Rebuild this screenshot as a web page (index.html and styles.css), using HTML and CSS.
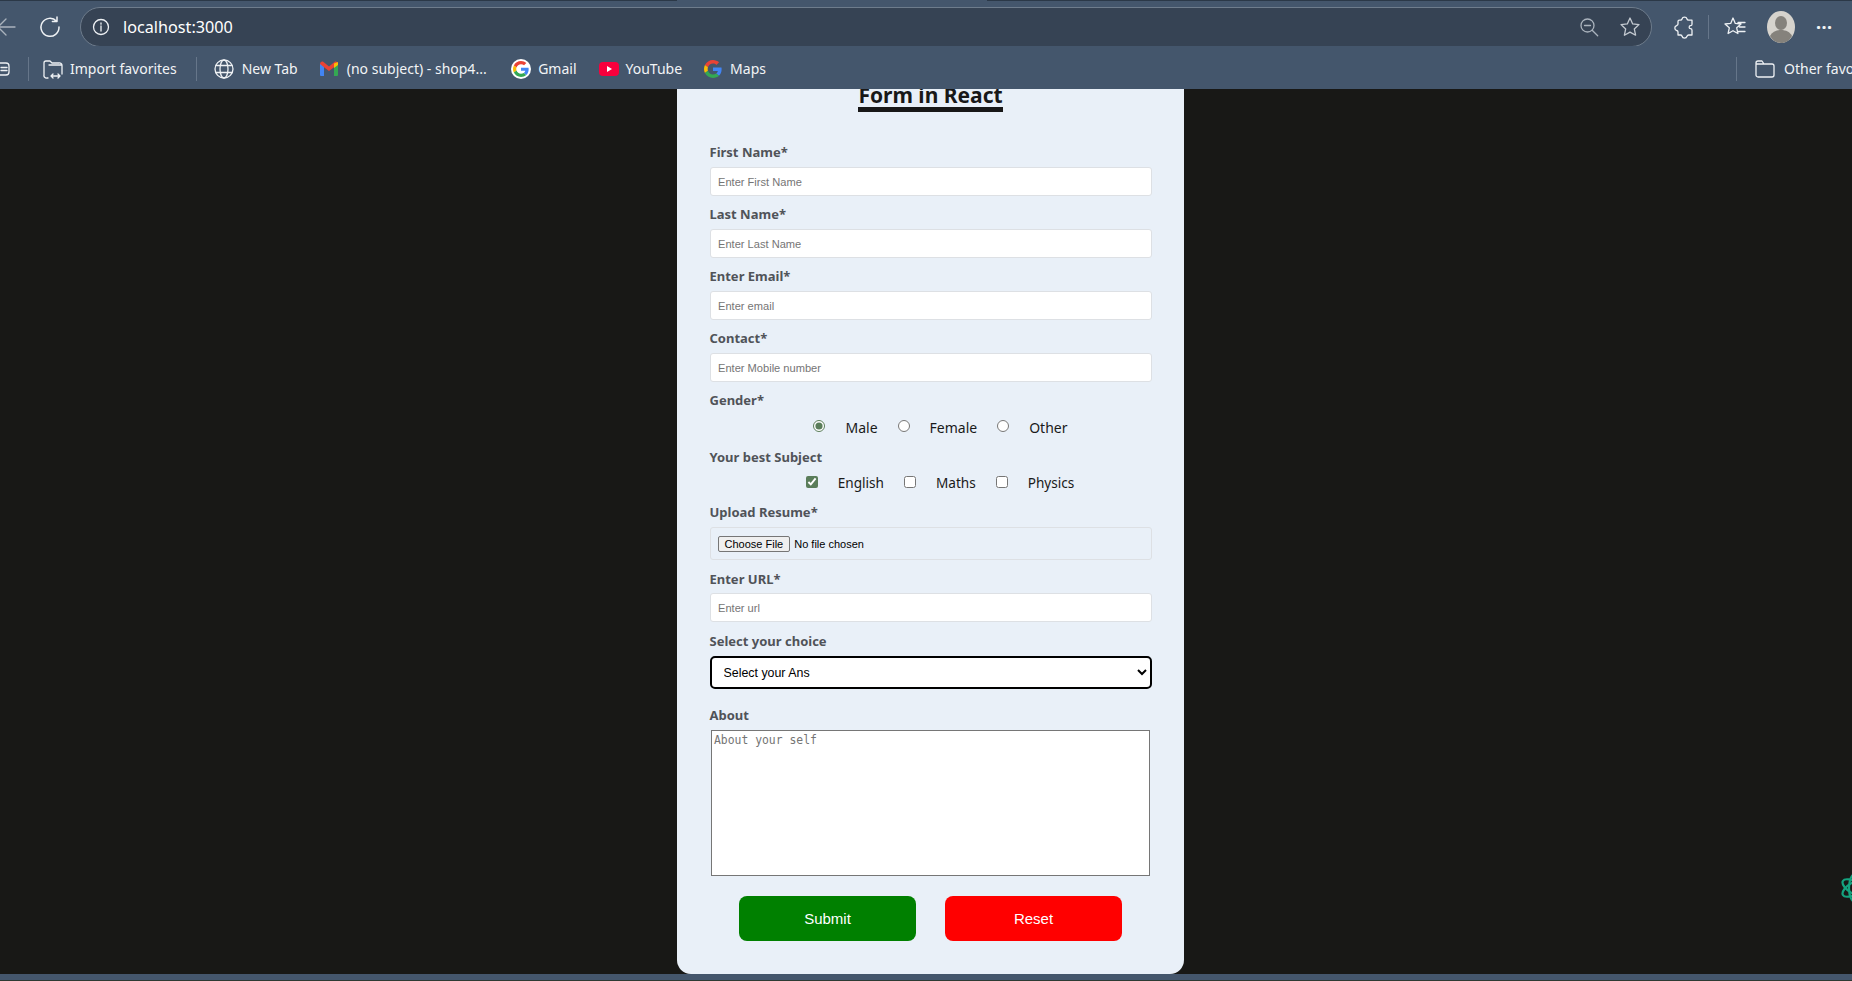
FILE: index.html
```html
<!DOCTYPE html>
<html lang="en">

<head>
    <meta charset="UTF-8">
    <meta name="viewport" content="width=device-width, initial-scale=1.0">
    <title>Form in React</title>
    <link rel="stylesheet" href="styles.css">
</head>

<body>
    <svg class="defs" width="0" height="0">
        <symbol id="g-logo" viewBox="0 0 48 48">
            <path fill="#EA4335" d="M24 9.5c3.54 0 6.71 1.22 9.21 3.6l6.85-6.85C35.9 2.38 30.47 0 24 0 14.62 0 6.51 5.38 2.56 13.22l7.98 6.19C12.43 13.72 17.74 9.5 24 9.5z"/>
            <path fill="#4285F4" d="M46.98 24.55c0-1.57-.15-3.09-.38-4.55H24v9.02h12.94c-.58 2.96-2.26 5.48-4.78 7.18l7.73 6c4.51-4.18 7.09-10.36 7.09-17.65z"/>
            <path fill="#FBBC05" d="M10.53 28.59c-.48-1.45-.76-2.99-.76-4.59s.27-3.14.76-4.59l-7.98-6.19C.92 16.46 0 20.12 0 24c0 3.88.92 7.54 2.56 10.78l7.97-6.19z"/>
            <path fill="#34A853" d="M24 48c6.48 0 11.93-2.13 15.89-5.81l-7.73-6c-2.15 1.45-4.92 2.3-8.16 2.3-6.26 0-11.57-4.22-13.47-9.91l-7.98 6.19C6.51 42.62 14.62 48 24 48z"/>
        </symbol>
    </svg>

    <div class="tabstrip">
        <div class="tab-edge tab-left"></div>
        <div class="tab-edge tab-right"></div>
    </div>

    <header class="toolbar">
        <svg class="ico back" width="16" height="24" viewBox="0 0 16 24"><path d="M15 12H-2M6 4l-8 8 8 8"/></svg>
        <svg class="ico reload" width="22" height="22" viewBox="0 0 22 22"><path d="M17.6 5.2A9 9 0 1 0 20 11M18 1v4.6h-4.6"/></svg>
        <div class="addressbar">
            <svg class="ico" width="18" height="18" viewBox="0 0 18 18"><circle cx="9" cy="9" r="7.5"/><path d="M9 8v5M9 5v1.2"/></svg>
            <span class="url">localhost:3000</span>
            <svg class="ico dim zoom-ico" width="20" height="20" viewBox="0 0 20 20"><circle cx="8.5" cy="8.5" r="6.5"/><path d="M5.5 8.5h6M13.2 13.2l5.5 5.5"/></svg>
            <svg class="ico star" width="22" height="22" viewBox="0 0 22 22"><path d="M11 2l2.700 5.900 6.300.7-4.700 4.300 1.300 6.300L11 16.100l-5.600 3.100 1.300-6.300L2 8.600l6.300-.7z"/></svg>
        </div>
        <svg class="ico puzzle" width="20" height="24" viewBox="0 0 20 24"><path d="M8 4a2.600 2.600 0 0 1 5 0c.2 1 .8 1.200 1.800 1.200H18v4c0 1-.8 1.500-1.500 1.500-1.800 0-1.800 3 0 3 .7 0 1.500.5 1.500 1.500V20h-3.400c-1 0-1.300.5-1.600 1.300a2.600 2.600 0 0 1-5 0C8 20.500 7.500 20 6.600 20H4v-3c0-.8-.5-1.300-1.300-1.500a2.600 2.600 0 0 1 0-5C3.500 10.300 4 9.800 4 9V6.500c0-.8.500-1.300 1.300-1.300h1C7.200 5.200 7.800 5 8 4z"/></svg>
        <span class="tool-sep"></span>
        <svg class="ico fav" width="22" height="22" viewBox="0 0 22 22"><path d="M9 2l2.300 5.400 5.700.6-4.300 3.800 1.200 5.700L9 14.700l-4.900 2.800 1.200-5.700L1 8l5.700-.6zM14 6.500h7M15.500 11H21M14.500 15.500H21"/></svg>
        <svg class="avatar" width="28" height="32" viewBox="0 0 28 32"><ellipse cx="14" cy="16" rx="14" ry="16" fill="#d6d3cd"/><ellipse cx="14" cy="12" rx="6" ry="7" fill="#85827c"/><path d="M3 25c2-4 6-6 11-6s9 2 11 6c-2.500 4.500-6.500 7-11 7s-8.500-2.500-11-7z" fill="#85827c"/></svg>
        <span class="more">···</span>
    </header>

    <nav class="bookmarks">
        <svg class="ico" width="12" height="20" viewBox="0 0 12 20"><rect x="-8" y="4" width="17" height="12" rx="3"/><path d="M1 8.500h6M1 11.500h6"/></svg>
        <span class="bm-sep first-sep"></span>
        <a class="bm import">
            <svg class="ico" width="20" height="22" viewBox="0 0 20 22"><path d="M1 17V5a2 2 0 0 1 2-2h4l2 2h7a2.500 2.500 0 0 1 3 2.500V16M1 17a2.500 2.500 0 0 0 3 3h1M6 7h13M8 18h9M10 16l-2 2 2 2M15 16l2 2-2 2"/></svg>
            Import favorites
        </a>
        <span class="bm-sep second-sep"></span>
        <a class="bm new-tab">
            <svg class="ico" width="20" height="20" viewBox="0 0 20 20"><circle cx="10" cy="10" r="9"/><ellipse cx="10" cy="10" rx="4" ry="9"/><path d="M2 6.500h16M2 13.500h16"/></svg>
            New Tab
        </a>
        <a class="bm mail">
            <svg width="18" height="16" viewBox="0 0 18 16"><path fill="#4285F4" d="M0 3h4v12H1a1 1 0 0 1-1-1z"/><path fill="#34A853" d="M14 3h4v11a1 1 0 0 1-1 1h-3z"/><path fill="#EA4335" d="M0 3c0-2 2.200-3 3.500-2L9 5.500 14.500 1C16 0 18 1 18 3l-4 3.200L9 10 4 6.200z"/><path fill="#FBBC05" d="M14 2.500 18 1v3l-4 3z"/></svg>
            (no subject) - shop4...
        </a>
        <a class="bm gmail">
            <span class="g-round"><svg width="16" height="16"><use href="#g-logo"/></svg></span>
            Gmail
        </a>
        <a class="bm">
            <svg width="20" height="14" viewBox="0 0 20 14"><rect width="20" height="14" rx="4" fill="#f8003c"/><path d="M8 4l5 3-5 3z" fill="#fff"/></svg>
            YouTube
        </a>
        <a class="bm maps">
            <svg width="18" height="18"><use href="#g-logo"/></svg>
            Maps
        </a>
        <div class="bm-right">
            <span class="bm-sep"></span>
            <svg class="ico" width="20" height="18" viewBox="0 0 20 18"><path d="M1 15V3a2 2 0 0 1 2-2h4l2 3h8a2 2 0 0 1 2 2v9a2 2 0 0 1-2 2H3a2 2 0 0 1-2-2zM1 4h8"/></svg>
            <span class="other-fav">Other favorites</span>
        </div>
    </nav>

    <main class="page">
        <form class="card">
            <h1 class="title"><span>Form in React</span></h1>

            <div class="field">
                <label for="first">First Name*</label>
                <input class="text-input" id="first" type="text" placeholder="Enter First Name">
            </div>
            <div class="field">
                <label for="last">Last Name*</label>
                <input class="text-input" id="last" type="text" placeholder="Enter Last Name">
            </div>
            <div class="field">
                <label for="email">Enter Email*</label>
                <input class="text-input" id="email" type="email" placeholder="Enter email">
            </div>
            <div class="field">
                <label for="contact">Contact*</label>
                <input class="text-input" id="contact" type="text" placeholder="Enter Mobile number">
            </div>

            <div class="field-label">Gender*</div>
            <div class="choices gender">
                <input type="radio" name="gender" id="male" checked><label for="male">Male</label>
                <input type="radio" name="gender" id="female"><label for="female">Female</label>
                <input type="radio" name="gender" id="other"><label for="other">Other</label>
            </div>

            <div class="field-label">Your best Subject</div>
            <div class="choices subject">
                <input type="checkbox" id="english" checked><label for="english">English</label>
                <input type="checkbox" id="maths"><label for="maths">Maths</label>
                <input type="checkbox" id="physics"><label for="physics">Physics</label>
            </div>

            <div class="field">
                <label for="resume">Upload Resume*</label>
                <input class="file-input" id="resume" type="file">
            </div>
            <div class="field url-field">
                <label for="url">Enter URL*</label>
                <input class="text-input" id="url" type="url" placeholder="Enter url">
            </div>
            <div class="field">
                <label for="choice">Select your choice</label>
                <select class="select-input" id="choice">
                    <option>Select your Ans</option>
                </select>
            </div>
            <div class="field about">
                <label for="about">About</label>
                <textarea id="about" placeholder="About your self"></textarea>
            </div>

            <div class="actions">
                <button class="btn submit" type="submit">Submit</button>
                <button class="btn reset" type="reset">Reset</button>
            </div>
        </form>

        <svg class="floating" width="32" height="32" viewBox="0 0 32 32"><g fill="none" stroke="#14a37f" stroke-width="2.200"><ellipse cx="16" cy="16" rx="14" ry="6" transform="rotate(30 16 16)"/><ellipse cx="16" cy="16" rx="14" ry="6" transform="rotate(90 16 16)"/><ellipse cx="16" cy="16" rx="14" ry="6" transform="rotate(150 16 16)"/></g></svg>
    </main>

    <div class="bottom-strip"></div>
</body>

</html>
```

FILE: styles.css
```css
* {
    box-sizing: border-box;
}

html,
body {
    height: 100%;
}

body {
    margin: 0;
    display: flex;
    flex-direction: column;
    overflow: hidden;
    background-color: #181816;
    font-family: "Noto Sans", Arial, sans-serif;
}

.defs {
    position: absolute;
}

/* browser chrome */
.tabstrip {
    height: 7px;
    display: flex;
    justify-content: space-between;
    background-color: #44566c;
}

.tab-edge {
    height: 1px;
    background-color: #2b3847;
}

.tab-left {
    width: 677px;
}

.tab-right {
    width: 865px;
}

.ico {
    flex: none;
    fill: none;
    stroke: #eef1f4;
    stroke-width: 1.3;
    stroke-linecap: round;
    stroke-linejoin: round;
}

.ico.dim {
    stroke: #aab3bd;
}

.toolbar {
    height: 39px;
    display: flex;
    align-items: center;
    background-color: #44566c;
}

.back {
    stroke: #aab3bd;
}

.reload {
    margin-left: 23px;
    stroke-width: 1.5;
}

.addressbar {
    width: 1572px;
    height: 40px;
    margin-left: 19px;
    padding: 0 10px 0 11px;
    display: flex;
    align-items: center;
    background-color: #364354;
    border: 1px solid #6e7c8c;
    border-radius: 20px;
}

.url {
    margin-left: 13px;
    color: #fff;
    font-size: 16.2px;
}

.zoom-ico {
    margin-left: auto;
}

.star {
    margin-left: 20px;
    stroke: #c3c9d0;
}

.puzzle {
    margin-left: 22px;
}

.tool-sep {
    width: 1px;
    height: 24px;
    margin-left: 14px;
    background-color: #66768a;
}

.fav {
    margin-left: 15px;
}

.avatar {
    flex: none;
    margin-left: 21px;
}

.more {
    margin-left: 21px;
    color: #f2f4f6;
    font-size: 18px;
    font-weight: 700;
    letter-spacing: 0.5px;
}

.bookmarks {
    height: 43px;
    padding-top: 2px;
    display: flex;
    align-items: center;
    background-color: #44566c;
    color: #f2f4f6;
    font-size: 14px;
    white-space: nowrap;
}

.bm {
    display: flex;
    align-items: center;
    gap: 7px;
    margin-left: 22px;
}

.bm-sep {
    flex: none;
    width: 1px;
    height: 24px;
    background-color: #66768a;
}

.first-sep {
    margin-left: 16px;
}

.import {
    margin-left: 14px;
}

.second-sep {
    margin-left: 19px;
}

.new-tab {
    margin-left: 17px;
    gap: 8px;
}

.mail {
    gap: 9px;
}

.gmail {
    margin-left: 24.5px;
}

.maps {
    gap: 8px;
}

.g-round {
    width: 20px;
    height: 20px;
    display: flex;
    align-items: center;
    justify-content: center;
    background-color: #fff;
    border-radius: 50%;
}

.bm-right {
    margin-left: auto;
    display: flex;
    align-items: center;
}

.bm-right .ico {
    margin-left: 18px;
}

.other-fav {
    width: 68px;
    margin-left: 9px;
    overflow: hidden;
}

/* page */
.page {
    position: relative;
    flex: 1;
    min-height: 0;
    display: flex;
    justify-content: center;
    padding-left: 9px;
    overflow: hidden;
}

.card {
    width: 507px;
    padding: 0 32.5px 33px;
    background-color: #e9f0f8;
    border-radius: 0 0 14px 14px;
}

/* the page is scrolled a little, so the heading runs under the toolbar */
.title {
    height: 58px;
    margin: -5px 0 0;
    text-align: center;
    color: #181818;
    font-size: 21px;
    line-height: 23px;
}

.title span {
    display: inline-block;
    border-bottom: 5px solid #181818;
}

.field {
    margin-bottom: 8px;
}

.field > label,
.field-label {
    display: block;
    height: 20px;
    margin-bottom: 5px;
    color: #505358;
    font-size: 13px;
    font-weight: 700;
    line-height: 20px;
}

.field-label {
    margin-bottom: 0;
}

.text-input {
    display: block;
    width: 100%;
    height: 29px;
    padding: 0 7.5px;
    background-color: #fff;
    border: 1px solid #dde0e4;
    border-radius: 3px;
    font-family: "Liberation Sans", Arial, sans-serif;
    font-size: 11.1px;
}

.text-input::placeholder {
    color: #757575;
}

.choices {
    display: flex;
    justify-content: center;
    align-items: center;
    color: #1a1a1a;
}

.choices input {
    flex: none;
    margin: 0 20px 0 0;
    accent-color: #5a7d5a;
}

.choices label {
    margin-right: 20px;
}

.choices label:last-child {
    margin-right: 0;
}

.gender {
    height: 37px;
    padding: 0 0 2px 20px;
    font-size: 14px;
}

.gender input {
    width: 12px;
    height: 12px;
    transform: translateY(-2px);
}

.subject {
    height: 35px;
    padding: 0 0 4px 19px;
    font-size: 13.6px;
}

.subject input {
    width: 12px;
    height: 12px;
    transform: translateY(-1px);
}

.file-input {
    display: block;
    width: 100%;
    height: 33px;
    margin-bottom: 9px;
    padding: 8px 7px;
    border: 1px solid #dde0e4;
    border-radius: 3px;
    font-family: "Liberation Sans", Arial, sans-serif;
    font-size: 11px;
}

.file-input::file-selector-button {
    height: 16px;
    margin-right: 4px;
    padding: 0 6px;
    background-color: #efefef;
    border: 1px solid #767676;
    border-radius: 2px;
    font: inherit;
}

.url-field {
    margin-bottom: 9px;
}

.url-field > label {
    margin-bottom: 4px;
}

.select-input {
    display: block;
    width: 100%;
    height: 33px;
    padding: 0 8px;
    background-color: #fff;
    border: 2px solid #000;
    border-radius: 5px;
    color: #000;
    font-family: "Liberation Sans", Arial, sans-serif;
    font-size: 12.4px;
}

.about {
    margin-bottom: 20px;
    margin-top: 16px;
}

.about textarea {
    display: block;
    width: 439px;
    height: 146px;
    margin: 0 auto;
    padding: 2px;
    background-color: #fff;
    border: 1px solid #767676;
    resize: none;
    font-family: "DejaVu Sans Mono", monospace;
    font-size: 11.4px;
}

.actions {
    display: flex;
    justify-content: center;
    gap: 29px;
}

.btn {
    width: 177px;
    height: 45px;
    border: none;
    border-radius: 8px;
    color: #fff;
    font-family: "Liberation Sans", Arial, sans-serif;
    font-size: 15px;
}

.submit {
    background-color: #008000;
}

.reset {
    background-color: #f00;
}

.floating {
    position: absolute;
    top: 783px;
    right: -19px;
}

.bottom-strip {
    height: 7px;
    background-color: #44566c;
    border-bottom: 1px solid #2d3a33;
}
```
